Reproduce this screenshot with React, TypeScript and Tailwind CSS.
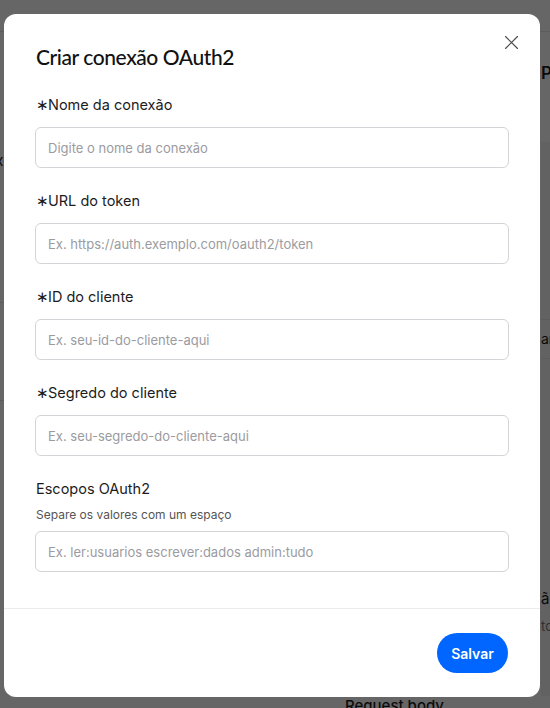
import React from "react";

const fields = [
  { label: "Nome da conexão", placeholder: "Digite o nome da conexão" },
  { label: "URL do token", placeholder: "Ex. https://auth.exemplo.com/oauth2/token" },
  { label: "ID do cliente", placeholder: "Ex. seu-id-do-cliente-aqui" },
  { label: "Segredo do cliente", placeholder: "Ex. seu-segredo-do-cliente-aqui" },
];

function Field({ label, placeholder, hint, required }: { label: string; placeholder: string; hint?: string; required?: boolean }) {
  return (
    <div className="flex flex-col">
      <label className="text-[14.5px] leading-[20px] text-[#1c1c1e] pl-[1px]">
        {required ? <span className="mr-[-1px] text-[#1c1c1e]">∗</span> : null}
        {label}
      </label>
      {hint ? (
        <p className="mt-[8px] text-[12px] leading-[16px] text-[#555] pl-[1px]">{hint}</p>
      ) : null}
      <input
        className={`${hint ? "mt-[8px]" : "mt-[12px]"} h-[41px] w-full rounded-[6px] border border-[#d4d4d8] px-[12px] text-[13px] text-[#1c1c1e] placeholder:text-[#9b9ba1] outline-none`}
        placeholder={placeholder}
      />
    </div>
  );
}

export default function App() {
  return (
    <div className="relative h-[708px] w-[550px] overflow-hidden bg-white" style={{ fontFamily: "Inter, 'Noto Sans', sans-serif" }}>
      {/* underlying page */}
      <div className="flex h-full flex-col">
        <div className="h-[32px] shrink-0 border-b border-gray-200" />
        <div className="flex flex-1">
          <div className="flex w-[335px] shrink-0 flex-col">
            <div className="h-[117px]" />
            <div className="h-[56px] -ml-[26px] text-[15px] leading-[24px] text-[#1c1c1e]">Fluxo</div>
            <div className="h-[98px] border-b border-gray-200" />
            <div className="h-[98px] border-b border-gray-200" />
          </div>
          <div className="flex flex-1 flex-col">
            <div className="flex flex-1">
              <div className="w-[206px] shrink-0" />
              <div className="flex w-[60px] shrink-0 flex-col bg-[#f4f4f4]">
                <div className="h-[30px] bg-white" />
                <div className="bg-white pb-[58px] text-[17px] font-semibold leading-[22px] text-[#1c1c1e]">Parâmetros</div>
                <div className="h-[177px]" />
                <div className="border-y border-gray-200 py-[8px] text-[14px] leading-[22px] text-[#1c1c1e]">ar</div>
                <div className="h-[230px]" />
                <div className="text-[15px] leading-[20px] text-[#1c1c1e]">ão</div>
                <div className="mt-[8px] text-[13px] leading-[18px] text-[#777]">to</div>
              </div>
            </div>
            <div className="h-[12px] pl-[10px] text-[15px] font-medium leading-[20px] text-[#1c1c1e]">Request body</div>
          </div>
        </div>
      </div>

      {/* overlay */}
      <div className="absolute inset-0 bg-black/60" />

      {/* dialog */}
      <div className="absolute left-[4px] top-[14px] flex h-[683px] w-[536px] flex-col rounded-[12px] bg-white">
        <button className="absolute right-[22px] top-[22px] flex h-[13px] w-[13px] items-center justify-center text-[#4b4b50]">
          <svg width="13" height="13" viewBox="0 0 13 13" fill="none" stroke="currentColor" strokeWidth="1.2" strokeLinecap="round">
            <path d="M0.5 0.5L12.5 12.5M12.5 0.5L0.5 12.5" />
          </svg>
        </button>
        <div className="flex flex-1 flex-col px-[31px] pt-[29px]">
          <h2 className="text-[21px] font-medium leading-[28px] tracking-[-0.02em] text-[#111] pl-[1px]" style={{ fontFamily: "Lato, Inter, sans-serif" }}>
            Criar conexão OAuth2
          </h2>
          <div className="mt-[24px] flex flex-col gap-[23px]">
            {fields.map((f) => (
              <Field key={f.label} label={f.label} placeholder={f.placeholder} required />
            ))}
            <Field label="Escopos OAuth2" hint="Separe os valores com um espaço" placeholder="Ex. ler:usuarios escrever:dados admin:tudo" />
          </div>
        </div>
        <div className="border-t border-[#ececec] px-[32px] pb-[24px] pt-[24px]">
          <div className="flex justify-end">
            <button className="h-[40px] w-[71px] rounded-full bg-[#0066ff] text-[14px] font-semibold text-white">Salvar</button>
          </div>
        </div>
      </div>
    </div>
  );
}
